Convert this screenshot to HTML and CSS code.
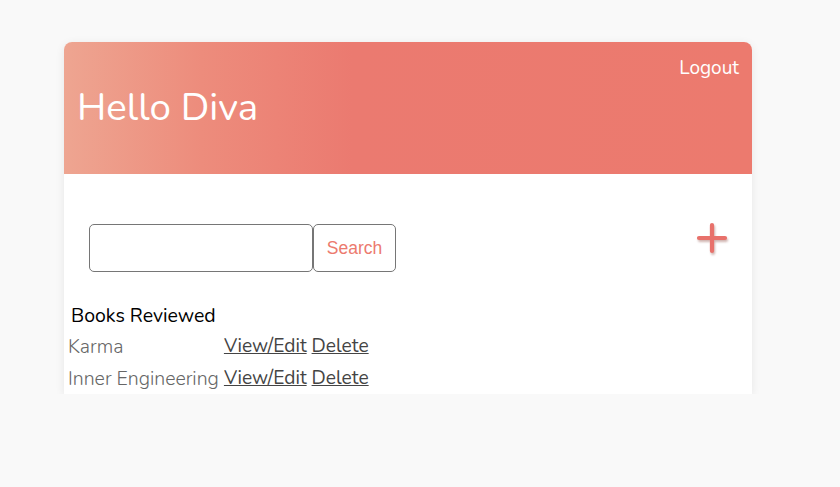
FILE: index.html
```html
<!DOCTYPE html>
<html>
<head>
<meta charset="utf-8">
<link rel="stylesheet" href="styles.css">
</head>
<body>
<div class="card">
  <header class="header">
    <a class="logout" href="#">Logout</a>
    <h1 class="greeting">Hello Diva</h1>
  </header>
  <section class="content">
    <div class="search-row">
      <form class="search-form">
        <input class="search-input" type="text">
        <button class="search-btn" type="button">Search</button>
      </form>
      <span class="add-btn">
        <svg width="32" height="32" viewBox="0 0 32 32">
          <path d="M16 3 V29 M3 16 H29" stroke="#e8716b" stroke-width="4.2" stroke-linecap="round" fill="none"/>
        </svg>
      </span>
    </div>
    <div class="books-title">Books Reviewed</div>
    <table class="books">
      <tr><td class="book-name">Karma</td><td><a href="#">View/Edit</a> <a href="#">Delete</a></td></tr>
      <tr><td class="book-name">Inner Engineering</td><td><a href="#">View/Edit</a> <a href="#">Delete</a></td></tr>
    </table>
  </section>
</div>
</body>
</html>
```
FILE: styles.css
```css
html, body {
  margin: 0;
  padding: 0;
  background: #f9f9f9;
  font-family: "Nunito", "Lato", "Open Sans", sans-serif;
}
.card {
  width: 688px;
  margin: 42px 0 0 64px;
  background: #fff;
  border-radius: 8px 8px 0 0;
  box-shadow: 0 2px 10px rgba(0,0,0,0.08);
}
.header {
  height: 132px;
  box-sizing: border-box;
  border-radius: 8px 8px 0 0;
  background: linear-gradient(to right, #eea591 0%, #ed8c7c 20%, #eb7a70 42%, #ec7a6e 100%);
  display: flex;
  flex-direction: column;
  padding: 12px 13px 0 13px;
}
.logout {
  align-self: flex-end;
  color: #fff;
  text-decoration: none;
  font-size: 19px;
  line-height: 28px;
}
.greeting {
  margin: 0;
  color: #fff;
  font-weight: 400;
  font-size: 38.5px;
  line-height: 52px;
}
.content {
  padding: 50px 25px 0 25px;
}
.search-row {
  display: flex;
  justify-content: space-between;
  align-items: flex-start;
}
.search-form {
  display: flex;
}
.search-input {
  width: 224px;
  height: 48px;
  box-sizing: border-box;
  border: 1px solid #767676;
  border-radius: 5px;
  margin: 0;
}
.search-btn {
  height: 48px;
  width: 83px;
  box-sizing: border-box;
  border: 1px solid #767676;
  border-radius: 5px;
  background: #fff;
  color: #ec7a6e;
  font-family: "Liberation Sans", Arial, sans-serif;
  font-size: 17.5px;
  margin: 0;
}
.add-btn {
  display: block;
  margin: -2px -1px 0 0;
  filter: drop-shadow(1px 2px 1px rgba(120,40,30,0.35));
}
.books-title {
  margin: 30px 0 0 -18px;
  font-size: 19.5px;
  line-height: 28px;
  color: #000;
}
.books {
  margin-left: -21px;
  border-collapse: collapse;
  font-size: 19.2px;
}
.books td {
  padding: 0 5px 0 0;
  height: 32px;
}
.book-name {
  color: #666;
  font-weight: 300;
  font-size: 19.5px;
}
.books a {
  color: #444;
  text-decoration: underline;
}
```
